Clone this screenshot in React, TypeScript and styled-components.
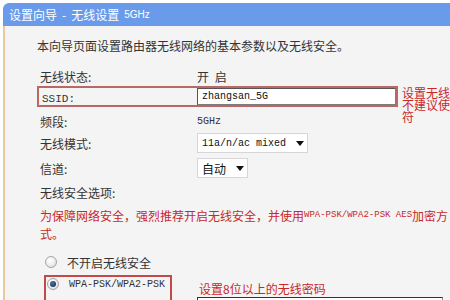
import React from "react";
import styled, { createGlobalStyle, css } from "styled-components";

const GlobalStyle = createGlobalStyle`
  html, body { margin: 0; padding: 0; background: #fff; overflow: hidden; }
  body {
    font-family: "Noto Sans CJK SC", "DejaVu Sans", sans-serif;
    font-size: 12px;
    color: #333;
  }
`;

const Page = styled.div`
  width: 450px;
  height: 300px;
  overflow: hidden;
  padding: 3px 0 0 3px;
  box-sizing: border-box;
`;

const Header = styled.div`
  height: 23px;
  background: #6a9bea;
  border-top-left-radius: 6px;
  color: #fff;
  display: flex;
  align-items: center;
  gap: 5px;
  padding-left: 6px;
  font-size: 12px;
  white-space: nowrap;
`;

const HeaderSmall = styled.span`
  font-family: "Liberation Sans", sans-serif;
  font-size: 10px;
`;

const Panel = styled.div`
  background: #f4f4f4;
  border-left: 2px solid #ecc99a;
  padding-left: 32px;
  height: 274px;
  display: flex;
  flex-direction: column;
  white-space: nowrap;
`;

const Row = styled.div<{ $h: number; $pt?: number; $mt?: number; $red?: boolean }>`
  display: flex;
  align-items: center;
  height: ${(p) => p.$h}px;
  padding-top: ${(p) => p.$pt || 0}px;
  margin-top: ${(p) => p.$mt || 0}px;
  box-sizing: border-box;
  flex-shrink: 0;
  ${(p) =>
    p.$red &&
    css`
      color: #c82828;
      padding-left: 3px;
    `}
`;

const Label = styled.span<{ $w?: number }>`
  width: ${(p) => p.$w || 160}px;
  padding-left: 3px;
  box-sizing: border-box;
  flex-shrink: 0;
`;

const Mono = styled.span<{ $size?: number }>`
  font-family: "Liberation Mono", monospace;
  font-size: ${(p) => p.$size || 10}px;
`;

const Spaced = styled.span`
  word-spacing: 3px;
`;

const SsidLine = styled.div`
  display: flex;
  align-items: flex-start;
  height: 21px;
  flex-shrink: 0;
`;

const SsidBox = styled.div`
  width: 361px;
  height: 21px;
  box-sizing: border-box;
  border: 2px solid #b96866;
  display: flex;
  align-items: center;
`;

const TextInput = styled.div<{ $w: number }>`
  width: ${(p) => p.$w}px;
  height: 17px;
  box-sizing: border-box;
  border: 1px solid #7d7d7d;
  border-top-color: #555;
  border-left-color: #555;
  background: #fff;
  display: flex;
  align-items: center;
  padding-left: 4px;
  color: #111;
`;

const SideNote = styled.div`
  margin-left: 4px;
  margin-top: 1px;
  line-height: 12px;
  color: #c82828;
  height: 21px;
`;

const Select = styled.div`
  display: inline-flex;
  align-items: center;
  gap: 10px;
  height: 20px;
  box-sizing: border-box;
  border: 1px solid #d6d6d6;
  background: #fff;
  padding: 0 3px 0 4px;
  color: #111;
`;

const Arrow = styled.span`
  width: 0;
  height: 0;
  border-left: 4px solid transparent;
  border-right: 4px solid transparent;
  border-top: 5px solid #111;
`;

const Radio = styled.span<{ $checked?: boolean }>`
  position: relative;
  width: 12px;
  height: 12px;
  box-sizing: border-box;
  border-radius: 50%;
  border: 1px solid #a4a4a4;
  background: radial-gradient(circle at 40% 35%, #ffffff 0%, #ececec 55%, #cdcdcd 100%);
  flex-shrink: 0;
  margin-right: 10px;
  ${(p) =>
    p.$checked &&
    css`
      &::after {
        content: "";
        position: absolute;
        left: 2px;
        top: 2px;
        width: 6px;
        height: 6px;
        border-radius: 50%;
        background: radial-gradient(circle at 40% 35%, #4f74a3 0%, #1b3a63 70%);
      }
    `}
`;

const RadioRow = styled(Row)`
  padding-left: 8px;
`;

const WpaLine = styled.div`
  display: flex;
  align-items: flex-start;
  margin-top: 3px;
  flex-shrink: 0;
`;

const RedBox = styled.div`
  margin-left: 7px;
  width: 128px;
  height: 32px;
  box-sizing: border-box;
  border: 2px solid #c44a4a;
  padding: 0 0 0 1px;
`;

const WpaInner = styled.div`
  display: flex;
  align-items: center;
  height: 14px;
`;

const PwdColumn = styled.div`
  margin-left: 25px;
  display: flex;
  flex-direction: column;
`;

const PwdNote = styled.div`
  color: #c82828;
  padding-left: 2px;
  margin-top: 6px;
  height: 16px;
  line-height: 16px;
`;

const PwdInput = styled.div`
  width: 246px;
  height: 20px;
  box-sizing: border-box;
  border: 1px solid #888;
  border-top-color: #333;
  border-left-color: #333;
  background: #fff;
`;

export default function App() {
  return (
    <>
      <GlobalStyle />
      <Page>
        <Header>
          <span>设置向导</span>
          <span>-</span>
          <span>无线设置</span>
          <HeaderSmall>5GHz</HeaderSmall>
        </Header>
        <Panel>
          <Row $h={38}>本向导页面设置路由器无线网络的基本参数以及无线安全。</Row>
          <Row $h={22} $pt={2}>
            <Label>无线状态:</Label>
            <Spaced>开 启</Spaced>
          </Row>
          <SsidLine>
            <SsidBox>
              <Label $w={158}>
                <Mono $size={11}>SSID:</Mono>
              </Label>
              <TextInput $w={199}>
                <Mono>zhangsan_5G</Mono>
              </TextInput>
            </SsidBox>
            <SideNote>
              设置无线网络名称，
              <br />
              不建议使用中文字
              <br />符
            </SideNote>
          </SsidLine>
          <Row $h={26} $pt={3}>
            <Label>频段:</Label>
            <Mono>5GHz</Mono>
          </Row>
          <Row $h={20}>
            <Label>无线模式:</Label>
            <Select>
              <Mono>11a/n/ac mixed</Mono>
              <Arrow />
            </Select>
          </Row>
          <Row $h={20} $mt={5}>
            <Label>信道:</Label>
            <Select>
              <span>自动</span>
              <Arrow />
            </Select>
          </Row>
          <Row $h={28} $pt={1}>
            <Label>无线安全选项:</Label>
          </Row>
          <Row $h={18} $red>
            为保障网络安全，强烈推荐开启无线安全，并使用<Mono $size={9}>WPA-PSK/WPA2-PSK AES</Mono>加密方
          </Row>
          <Row $h={18} $red>
            式。
          </Row>
          <RadioRow $h={20} $mt={10}>
            <Radio />
            <span>不开启无线安全</span>
          </RadioRow>
          <WpaLine>
            <RedBox>
              <WpaInner>
                <Radio $checked />
                <Mono>WPA-PSK/WPA2-PSK</Mono>
              </WpaInner>
            </RedBox>
            <PwdColumn>
              <PwdNote>设置8位以上的无线密码</PwdNote>
              <PwdInput />
            </PwdColumn>
          </WpaLine>
        </Panel>
      </Page>
    </>
  );
}
